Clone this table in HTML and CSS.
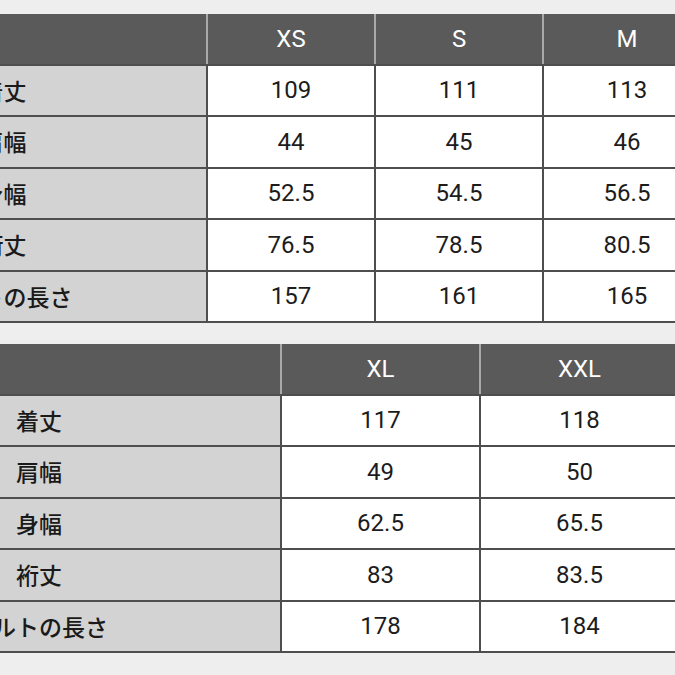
FILE: index.html
```html
<!DOCTYPE html>
<html lang="ja">
<head>
<meta charset="utf-8">
<title>サイズ表</title>
<link rel="stylesheet" href="styles.css">
</head>
<body>
<div class="page">
  <div class="table table-top">
    <div class="row head">
      <div class="cell label"></div>
      <div class="cell">XS</div>
      <div class="cell">S</div>
      <div class="cell">M</div>
    </div>
    <div class="row">
      <div class="cell label">着丈</div>
      <div class="cell">109</div>
      <div class="cell">111</div>
      <div class="cell">113</div>
    </div>
    <div class="row">
      <div class="cell label">肩幅</div>
      <div class="cell">44</div>
      <div class="cell">45</div>
      <div class="cell">46</div>
    </div>
    <div class="row">
      <div class="cell label">身幅</div>
      <div class="cell">52.5</div>
      <div class="cell">54.5</div>
      <div class="cell">56.5</div>
    </div>
    <div class="row">
      <div class="cell label">裄丈</div>
      <div class="cell">76.5</div>
      <div class="cell">78.5</div>
      <div class="cell">80.5</div>
    </div>
    <div class="row">
      <div class="cell label">ベルトの長さ</div>
      <div class="cell">157</div>
      <div class="cell">161</div>
      <div class="cell">165</div>
    </div>
  </div>

  <div class="table table-bottom">
    <div class="row head">
      <div class="cell label"></div>
      <div class="cell">XL</div>
      <div class="cell">XXL</div>
    </div>
    <div class="row">
      <div class="cell label">着丈</div>
      <div class="cell">117</div>
      <div class="cell">118</div>
    </div>
    <div class="row">
      <div class="cell label">肩幅</div>
      <div class="cell">49</div>
      <div class="cell">50</div>
    </div>
    <div class="row">
      <div class="cell label">身幅</div>
      <div class="cell">62.5</div>
      <div class="cell">65.5</div>
    </div>
    <div class="row">
      <div class="cell label">裄丈</div>
      <div class="cell">83</div>
      <div class="cell">83.5</div>
    </div>
    <div class="row">
      <div class="cell label">ベルトの長さ</div>
      <div class="cell">178</div>
      <div class="cell">184</div>
    </div>
  </div>
</div>
</body>
</html>
```

FILE: styles.css
```css
html, body {
  margin: 0;
  padding: 0;
  background: #eeeeee;
}

.page {
  width: 675px;
  height: 675px;
  overflow: hidden;
  padding-top: 14px;
  box-sizing: border-box;
  display: flex;
  flex-direction: column;
  gap: 21px;
  font-family: Roboto, "Noto Sans CJK JP", sans-serif;
  color: #1c1c1c;
}

.table {
  display: flex;
  flex-direction: column;
  border-bottom: 2px solid #4e4e4e;
  flex-shrink: 0;
}

.row {
  display: grid;
  height: 49.5px;
  border-top: 2px solid #4e4e4e;
}

.row.head {
  border-top: none;
  background: #5a5a5a;
}

.table-top {
  margin-left: -199px;
  width: 1000px;
}

.table-top .row {
  grid-template-columns: 405px 168px 168px 168px;
}

.table-bottom {
  margin-left: -202px;
  width: 1000px;
}

.table-bottom .row {
  grid-template-columns: 482px 199px 199px;
}

.cell {
  display: flex;
  align-items: center;
  justify-content: center;
  box-sizing: border-box;
  background: #ffffff;
  border-left: 2px solid #4e4e4e;
  font-size: 24px;
  line-height: 1;
}

.cell.label {
  background: #d3d3d3;
  border-left: none;
  font-family: "Noto Sans CJK JP", sans-serif;
  font-weight: 500;
  font-size: 23px;
  color: #1a1a1a;
}

.head .cell {
  background: #5a5a5a;
  color: #ffffff;
  border-left: 2px solid #a9a9a9;
}

.head .cell.label {
  border-left: none;
  background: #5a5a5a;
}
```
